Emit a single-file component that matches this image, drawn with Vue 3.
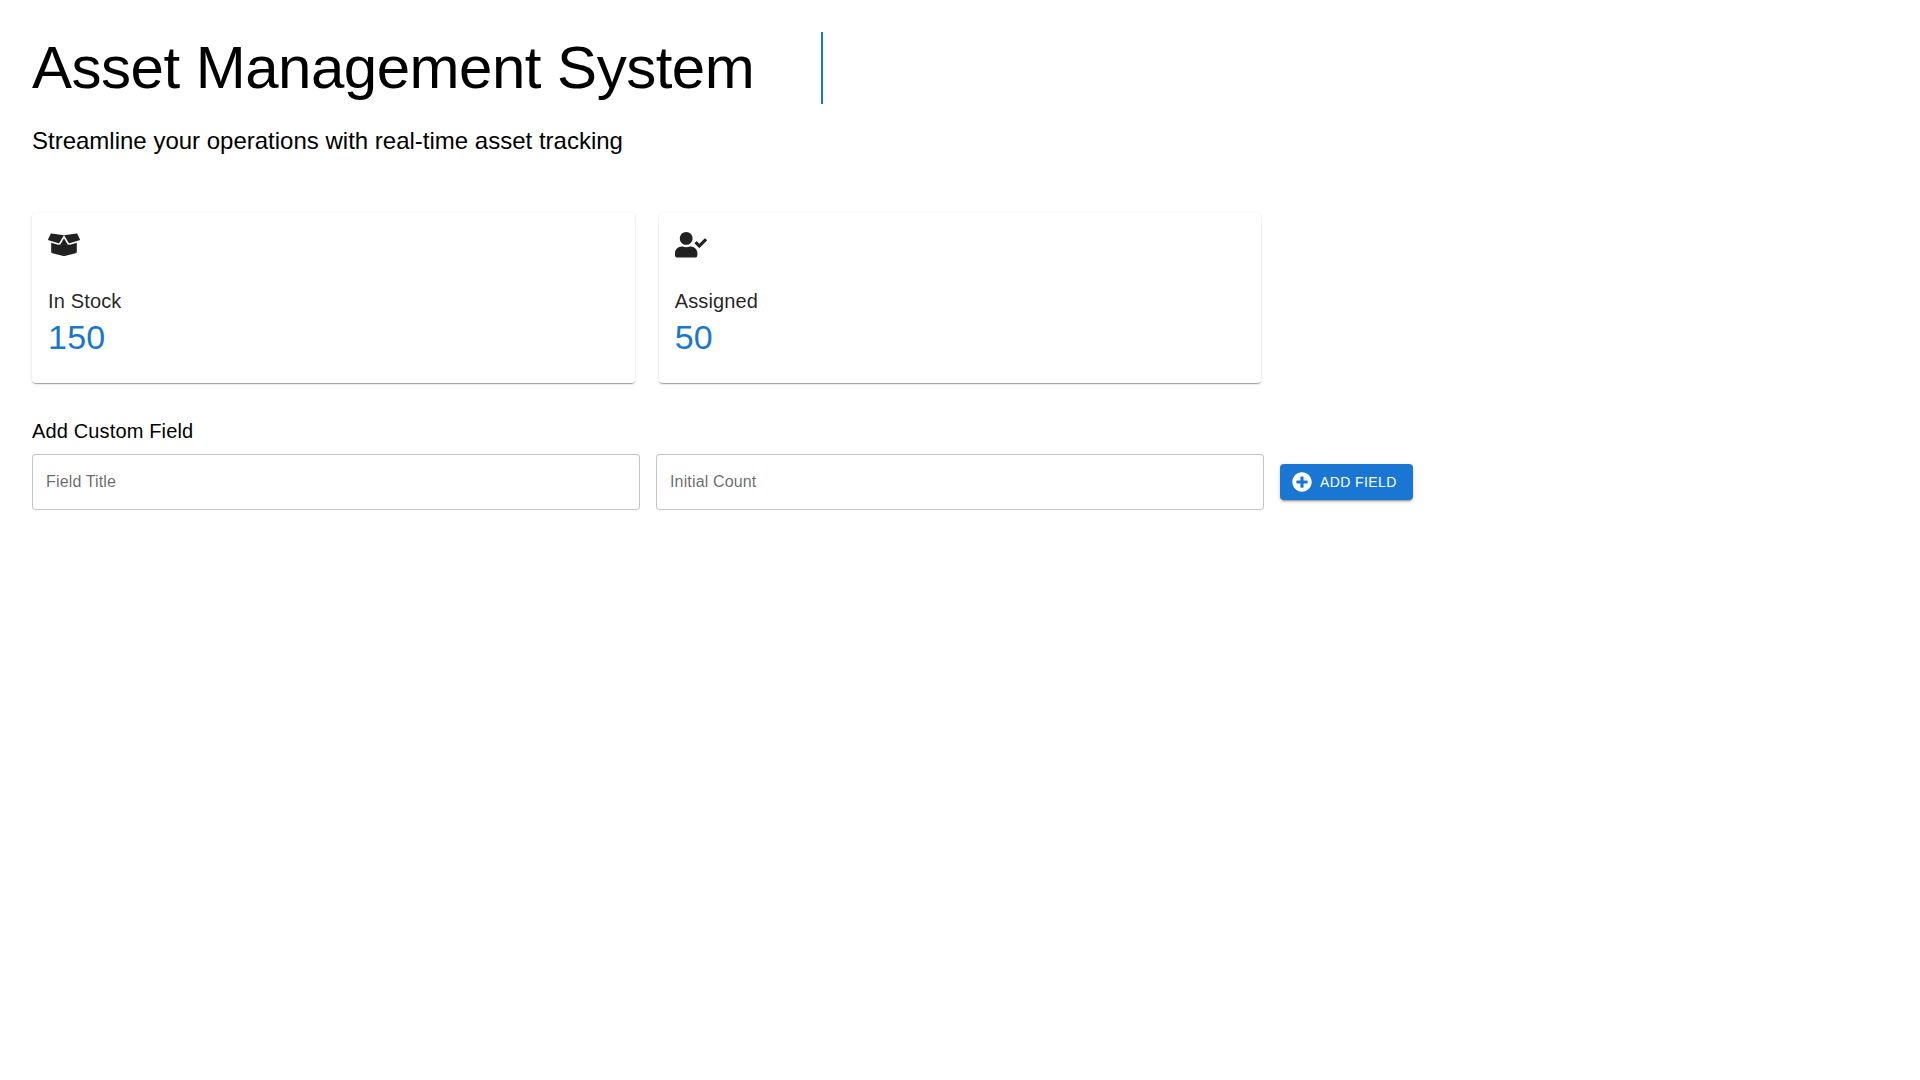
<template>
  <main class="page">
    <header class="hero">
      <h1 class="title">Asset Management System</h1>
      <p class="subtitle">Streamline your operations with real-time asset tracking</p>
    </header>

    <section class="cards">
      <article v-for="card in cards" :key="card.label" class="card">
        <svg class="card-icon" viewBox="0 0 640 512" aria-hidden="true"><path :d="card.icon" /></svg>
        <h2 class="card-label">{{ card.label }}</h2>
        <div class="card-value">{{ card.value }}</div>
      </article>
    </section>

    <section class="custom">
      <h2 class="custom-title">Add Custom Field</h2>
      <form class="custom-form" @submit.prevent>
        <input class="field" type="text" placeholder="Field Title" />
        <input class="field" type="text" placeholder="Initial Count" />
        <button class="add" type="submit">
          <svg class="add-icon" viewBox="0 0 512 512" aria-hidden="true"><path d="M256 8C119 8 8 119 8 256s111 248 248 248 248-111 248-248S393 8 256 8zm144 276c0 6.6-5.4 12-12 12h-92v92c0 6.6-5.4 12-12 12h-56c-6.6 0-12-5.4-12-12v-92h-92c-6.6 0-12-5.4-12-12v-56c0-6.6 5.4-12 12-12h92v-92c0-6.6 5.4-12 12-12h56c6.6 0 12 5.4 12 12v92h92c6.6 0 12 5.4 12 12v56z" /></svg>
          Add Field
        </button>
      </form>
    </section>
  </main>
</template>

<script setup>
const cards = [
  {
    label: 'In Stock',
    value: 150,
    icon: 'M425.7 256c-16.9 0-32.8-9-41.4-23.4L320 126l-64.2 106.6c-8.7 14.5-24.6 23.5-41.5 23.5-4.5 0-9-.6-13.3-1.9L64 215v178c0 14.7 10 27.5 24.2 31l216.2 54.1c10.2 2.5 20.9 2.5 31 0L551.8 424c14.2-3.6 24.2-16.4 24.2-31V215l-137 39.1c-4.3 1.3-8.8 1.9-13.3 1.9zm212.6-112.2L586.8 41c-3.1-6.2-9.8-9.8-16.7-8.9L320 64l91.7 152.1c3.8 6.3 11.4 9.3 18.5 7.3l197.9-56.5c9.9-2.9 14.7-13.9 10.2-23.1zM53.2 41L1.7 143.8c-4.6 9.2.3 20.2 10.1 23l197.9 56.5c7.1 2 14.7-1 18.5-7.3L320 64 69.8 32.1c-6.9-.8-13.5 2.7-16.6 8.9z'
  },
  {
    label: 'Assigned',
    value: 50,
    icon: 'M224 256c70.7 0 128-57.3 128-128S294.7 0 224 0 96 57.3 96 128s57.3 128 128 128zm89.6 32h-16.7c-22.2 10.2-46.9 16-72.9 16s-50.6-5.8-72.9-16h-16.7C60.2 288 0 348.2 0 422.4V464c0 26.5 21.5 48 48 48h352c26.5 0 48-21.5 48-48v-41.6c0-74.2-60.2-134.4-134.4-134.4zm323-128.4l-27.8-28.1c-4.6-4.7-12.1-4.7-16.8-.1l-104.8 104-45.5-45.8c-4.6-4.7-12.1-4.7-16.8-.1l-28.1 27.9c-4.7 4.6-4.7 12.1-.1 16.8l81.7 82.3c4.6 4.7 12.1 4.7 16.8.1l141.3-140.2c4.6-4.7 4.7-12.2.1-16.8z'
  }
]
</script>

<style>
body {
  background: #fff;
}
</style>

<style scoped>
.page {
  padding: 32px;
  font-family: "Liberation Sans", Arial, sans-serif;
  color: #000;
}

.hero {
  margin-bottom: 56px;
}

.title {
  box-sizing: border-box;
  width: 791px;
  height: 72px;
  margin: 0 0 21px;
  border-right: 2px solid #1976d2;
  font-size: 60px;
  font-weight: 400;
  line-height: 72px;
  letter-spacing: -0.5px;
}

.subtitle {
  margin: 0;
  font-size: 24px;
  line-height: 32px;
}

.cards {
  display: grid;
  grid-template-columns: repeat(2, 602.67px);
  gap: 24px;
  margin-bottom: 32px;
}

.card {
  box-sizing: border-box;
  height: 170px;
  padding: 16px;
  border-radius: 4px;
  background: #fff;
  box-shadow: 0 2px 1px -1px rgba(0, 0, 0, 0.2), 0 1px 1px rgba(0, 0, 0, 0.14), 0 1px 3px rgba(0, 0, 0, 0.12);
  color: rgba(0, 0, 0, 0.87);
}

.card-icon {
  display: block;
  width: 32px;
  height: 25.6px;
  margin: 3px 0 27px;
  fill: currentColor;
}

.card-label {
  margin: 0;
  font-size: 20px;
  font-weight: 400;
  line-height: 32px;
  letter-spacing: 0.15px;
}

.card-value {
  color: #1976d2;
  font-size: 34px;
  line-height: 40px;
  letter-spacing: 0.25px;
}

.custom-title {
  margin: 0 0 7px;
  font-size: 20px;
  font-weight: 400;
  line-height: 32px;
  letter-spacing: 0.15px;
}

.custom-form {
  display: flex;
  align-items: center;
  gap: 16px;
}

.field {
  box-sizing: border-box;
  width: 608px;
  height: 56px;
  padding: 0 13px;
  border: 1px solid rgba(0, 0, 0, 0.23);
  border-radius: 4px;
  background: #fff;
  color: rgba(0, 0, 0, 0.87);
  font-family: inherit;
  font-size: 16px;
  letter-spacing: 0.15px;
  outline: none;
}

.field::placeholder {
  color: rgba(0, 0, 0, 0.6);
  opacity: 1;
}

.add {
  display: inline-flex;
  align-items: center;
  box-sizing: border-box;
  width: 133px;
  height: 36.5px;
  padding: 6px 16px 6px 12px;
  border: 0;
  border-radius: 4px;
  background: #1976d2;
  box-shadow: 0 3px 1px -2px rgba(0, 0, 0, 0.2), 0 2px 2px rgba(0, 0, 0, 0.14), 0 1px 5px rgba(0, 0, 0, 0.12);
  color: #fff;
  font-family: "Liberation Sans", Arial, sans-serif;
  font-size: 14px;
  font-weight: 500;
  letter-spacing: 0.4px;
  text-transform: uppercase;
  white-space: nowrap;
}

.add-icon {
  width: 20px;
  height: 20px;
  margin-right: 8px;
  fill: currentColor;
}
</style>
